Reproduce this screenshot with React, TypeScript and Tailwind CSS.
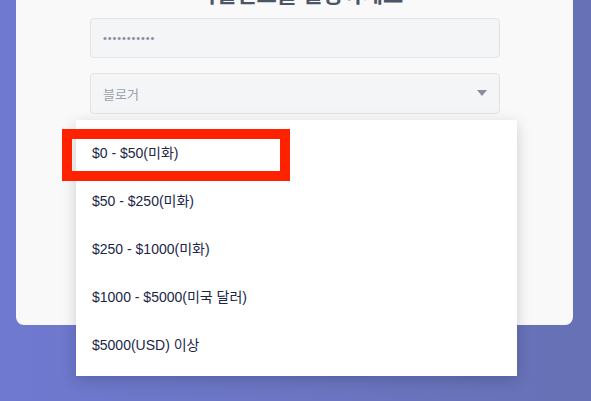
const OPTIONS = [
  '$0 - $50(미화)',
  '$50 - $250(미화)',
  '$250 - $1000(미화)',
  '$1000 - $5000(미국 달러)',
  '$5000(USD) 이상',
];

export default function App() {
  return (
    <div
      className="relative w-[591px] h-[401px] overflow-hidden bg-gradient-to-r from-[#6f79d0] to-[#6771b5]"
      style={{ fontFamily: '"Liberation Sans", "Noto Sans CJK KR", sans-serif' }}
    >
      {/* CARD */}
      <div className="ml-4 mr-[18px] h-[325px] rounded-b-lg bg-[#f9f9f9] overflow-hidden">
        <div className="h-[18px] overflow-hidden flex items-end justify-center">
          <h1 className="text-[22px] leading-[30px] mb-[11px] ml-[10px] font-bold text-[#4b5568] text-center" style={{ fontFamily: '"Noto Sans CJK KR", sans-serif' }}>
            비밀번호를 설정하세요
          </h1>
        </div>
        <div className="ml-[74px] w-[410px] flex flex-col gap-[15px]">
          <div className="h-10 rounded-sm border border-[#e3e3e6] bg-[#f4f5f7] flex items-center px-3 text-[#848da0] text-[11px] tracking-[0.9px]">
            •••••••••••
          </div>
          <div className="h-[41px] rounded-sm border border-[#e3e3e6] bg-[#f4f5f7] flex items-center justify-between px-3">
            <span className="text-[13px] text-[#9aa0ad]" style={{ fontFamily: '"Noto Sans CJK KR", sans-serif' }}>블로거</span>
            <svg width="10" height="6" viewBox="0 0 10 6" className="text-[#868d9e] mb-[2px]">
              <path d="M0 0h10L5 6z" fill="currentColor" />
            </svg>
          </div>
        </div>
      </div>

      {/* DROPDOWN */}
      <div className="absolute left-[76px] top-[120px] w-[441px] h-[256px] bg-white shadow-[0_4px_14px_rgba(0,0,0,0.18)] pt-[9px]">
        {OPTIONS.map((o) => (
          <div key={o} className="h-[48px] flex items-center pl-4 text-[14px] text-[#1b2647]">
            {o}
          </div>
        ))}
      </div>

      {/* HIGHLIGHT */}
      <div className="absolute left-[62px] top-[129px] w-[228px] h-[52px] border-[10px] border-[#ff2200]" />
    </div>
  );
}
